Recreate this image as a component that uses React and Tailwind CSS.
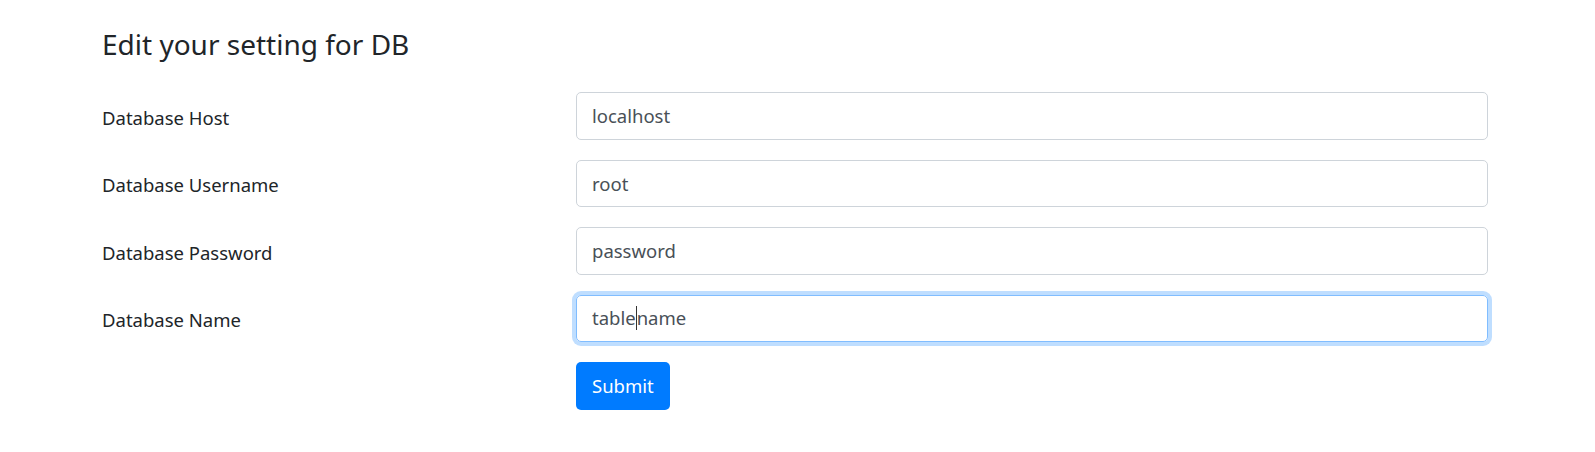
import { useState } from 'react';

const fields = [
  { label: 'Database Host', value: 'localhost' },
  { label: 'Database Username', value: 'root' },
  { label: 'Database Password', value: 'password' },
];

function App() {
  const [values, setValues] = useState(fields.map((f) => f.value));

  return (
    <div className="min-h-screen bg-white text-[#212529]" style={{ fontFamily: '"Noto Sans", sans-serif' }}>
      <div className="ml-[102px] w-[1386px] pt-[27px]">
        <h4 className="text-[28px] leading-[34px] mb-[31px]">Edit your setting for DB</h4>

        <form onSubmit={(e) => e.preventDefault()}>
          {fields.map((field, i) => (
            <div key={field.label} className="flex items-center mb-[20px]">
              <label className="w-[474px] shrink-0 pt-[4px] text-[18.5px] leading-[30px]">{field.label}</label>
              <input
                type="text"
                value={values[i]}
                onChange={(e) => {
                  const next = [...values];
                  next[i] = e.target.value;
                  setValues(next);
                }}
                className="w-[912px] h-[47.5px] px-[15px] rounded-[5px] border border-[#ced4da] text-[18.5px] text-[#495057] outline-none"
              />
            </div>
          ))}

          {/* focused field, caret drawn after "table" */}
          <div className="flex items-center mb-[20px]">
            <label className="w-[474px] shrink-0 pt-[4px] text-[18.5px] leading-[30px]">Database Name</label>
            <div className="w-[912px] h-[47.5px] px-[15px] rounded-[5px] border border-[#80bdff] shadow-[0_0_0_4px_rgba(0,123,255,0.25)] text-[18.5px] text-[#495057] flex items-center">
              <span>table</span>
              <span className="inline-block w-px h-[24px] bg-[#333]" />
              <span>name</span>
            </div>
          </div>

          <div className="flex">
            <div className="w-[474px] shrink-0" />
            <button
              type="submit"
              className="h-[47.5px] px-[16px] rounded-[5px] bg-[#007bff] text-white text-[18.5px]"
            >
              Submit
            </button>
          </div>
        </form>
      </div>
    </div>
  );
}

export default App;
